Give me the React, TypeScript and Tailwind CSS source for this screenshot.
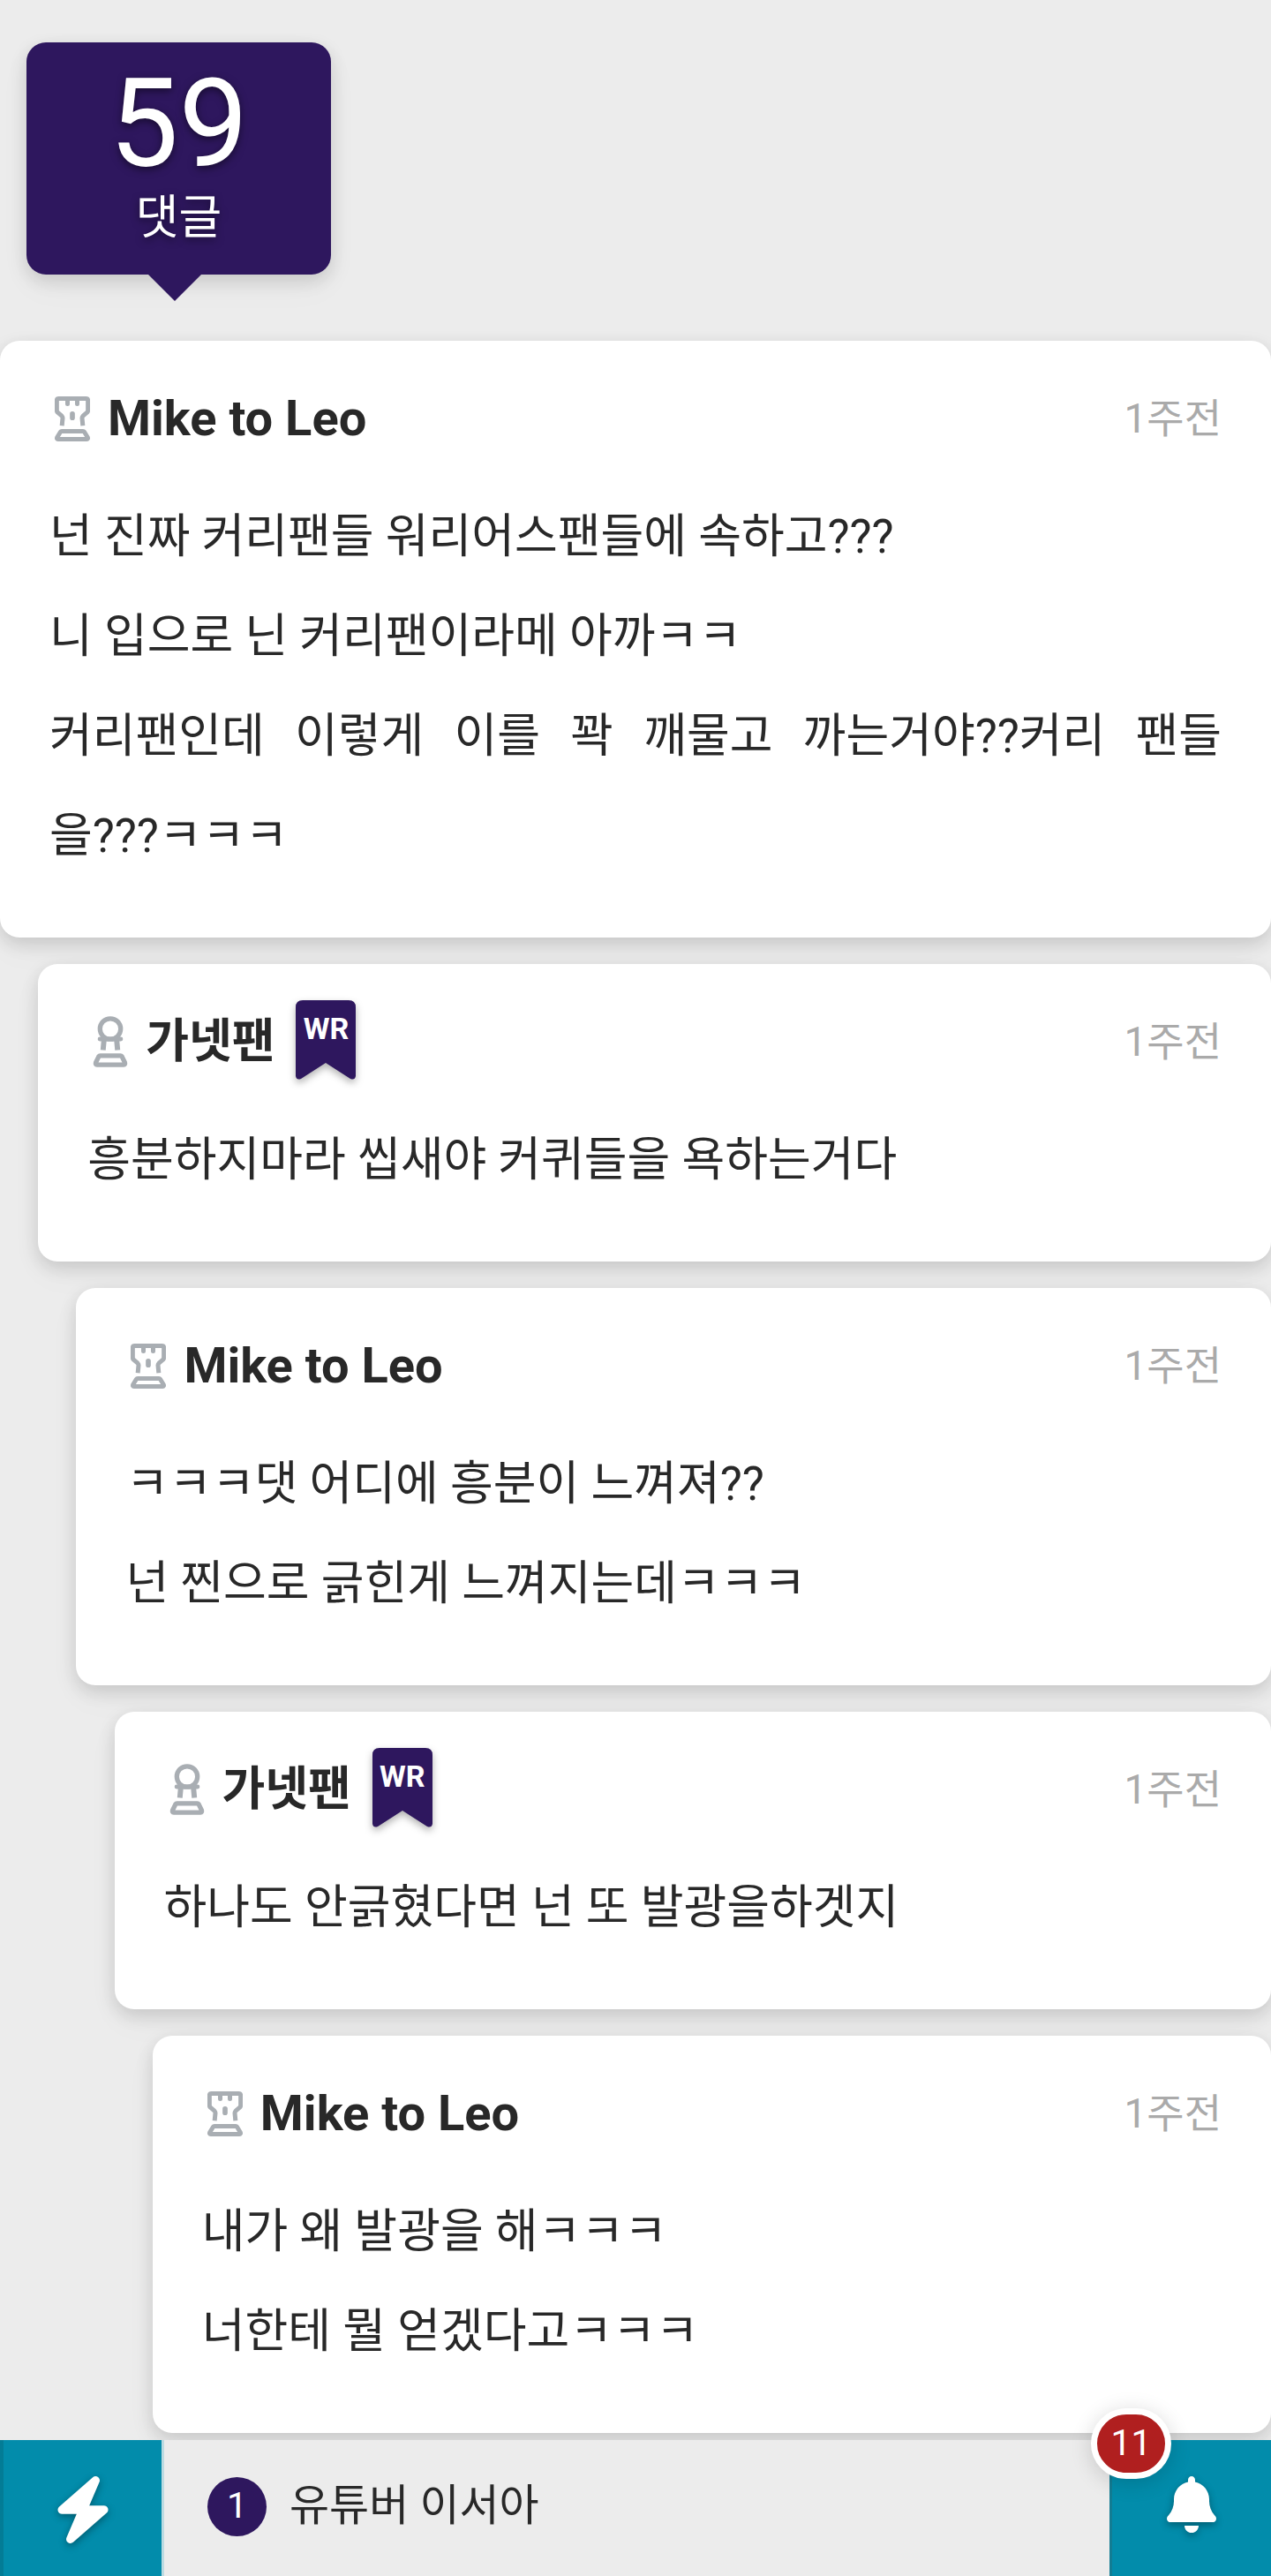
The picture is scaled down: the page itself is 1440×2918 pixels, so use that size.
import React from 'react'
import { FaBell, FaBolt } from 'react-icons/fa6'

type Comment = {
  id: number
  author: string
  authorSize: string
  rank: 'rook' | 'pawn'
  team?: string
  time: string
  indent: string
  lines: React.ReactNode[]
}

const comments: Comment[] = [
  {
    id: 1,
    author: 'Mike to Leo',
    authorSize: 'text-[56px]',
    rank: 'rook',
    time: '1주전',
    indent: 'ml-0',
    lines: [
      '넌 진짜 커리팬들 워리어스팬들에 속하고???',
      '니 입으로 닌 커리팬이라메 아까ㅋㅋ',
      <>
        커리팬인데 이렇게 이를 꽉 깨물고 까는거야??커리 팬들
        <wbr />
        <span className="whitespace-nowrap">을???ㅋㅋㅋ</span>
      </>,
    ],
  },
  {
    id: 2,
    author: '가넷팬',
    authorSize: 'text-[53px]',
    rank: 'pawn',
    team: 'WR',
    time: '1주전',
    indent: 'ml-[3%]',
    lines: ['흥분하지마라 씹새야 커퀴들을 욕하는거다'],
  },
  {
    id: 3,
    author: 'Mike to Leo',
    authorSize: 'text-[56px]',
    rank: 'rook',
    time: '1주전',
    indent: 'ml-[6%]',
    lines: ['ㅋㅋㅋ댓 어디에 흥분이 느껴져??', '넌 찐으로 긁힌게 느껴지는데ㅋㅋㅋ'],
  },
  {
    id: 4,
    author: '가넷팬',
    authorSize: 'text-[53px]',
    rank: 'pawn',
    team: 'WR',
    time: '1주전',
    indent: 'ml-[9%]',
    lines: ['하나도 안긁혔다면 넌 또 발광을하겟지'],
  },
  {
    id: 5,
    author: 'Mike to Leo',
    authorSize: 'text-[56px]',
    rank: 'rook',
    time: '1주전',
    indent: 'ml-[12%]',
    lines: ['내가 왜 발광을 해ㅋㅋㅋ', '너한테 뭘 얻겠다고ㅋㅋㅋ'],
  },
]

const RookIcon = () => (
  <svg
    viewBox="0 0 120 152"
    className="h-[51px] w-10"
    fill="none"
    stroke="currentColor"
    strokeWidth="15"
    strokeLinejoin="round"
    aria-hidden="true"
  >
    <path d="M24.5 99L27 73Q27 69 24 66L10 54Q7 51 7 47V14Q7 7 14 7H106Q113 7 113 14V47Q113 51 110 54L96 66Q93 69 93 73L95.500 99" />
    <path d="M43.500 7V25M76.500 7V25" strokeLinecap="round" />
    <path d="M60 59V72" strokeWidth="17" strokeLinecap="round" />
    <path d="M24 118H96Q99 118 101 121L112 139Q114 145 109 145H11Q6 145 8 139L19 121Q21 118 24 118Z" />
  </svg>
)

const PawnIcon = () => (
  <svg
    viewBox="0 0 118 176"
    className="h-[58px] w-10"
    fill="none"
    stroke="currentColor"
    strokeWidth="16"
    strokeLinejoin="round"
    aria-hidden="true"
  >
    <circle cx="59" cy="44" r="35.5" />
    <path d="M23 79H95" strokeWidth="15" strokeLinecap="round" />
    <path d="M37 84L34 117M81 84L84 117" strokeWidth="18" />
    <path d="M24 136H94Q97 136 99 139L109 160Q111 167 105 167H13Q7 167 9 160L19 139Q21 136 24 136Z" />
  </svg>
)

const TeamRibbon = ({ name }: { name: string }) => (
  <span className="relative -mt-5 -mb-4 ml-6 flex h-[90px] w-[68px] justify-center pt-3">
    <svg
      viewBox="0 0 68 90"
      className="absolute inset-0 h-full w-full text-[#2e175e] drop-shadow-[0_4px_4px_rgba(0,0,0,0.3)]"
      fill="currentColor"
      aria-hidden="true"
    >
      <path d="M8 0H60Q68 0 68 8V86Q67 91 62 89L34 71L6 89Q1 91 0 86V8Q0 0 8 0Z" />
    </svg>
    <span className="relative text-[34px] leading-10 font-bold text-white">{name}</span>
  </span>
)

const CommentCard = ({ comment }: { comment: Comment }) => (
  <article
    className={`rounded-[22px] bg-white px-14 pt-[58px] pb-[58px] shadow-[0_7px_20px_rgba(0,0,0,0.14),0_15px_40px_rgba(0,0,0,0.03)] ${comment.indent}`}
  >
    <header className="flex h-[60px] items-center">
      <span className="flex w-[52px] justify-center text-[#a9aeb3]">
        {comment.rank === 'rook' ? <RookIcon /> : <PawnIcon />}
      </span>
      <h2 className={`ml-[14px] leading-[60px] font-bold ${comment.authorSize}`}>
        {comment.author}
      </h2>
      {comment.team && <TeamRibbon name={comment.team} />}
      <time className="ml-auto text-[46px] leading-[60px] text-[#aaaaaa]">{comment.time}</time>
    </header>
    <div className="mt-12 text-justify text-[53px] leading-[113px]">
      {comment.lines.map((line, index) => (
        <p key={index}>{line}</p>
      ))}
    </div>
  </article>
)

const BottomBar = () => (
  <nav className="sticky bottom-0 mt-auto flex h-[154px] bg-[#ececec]">
    <button
      type="button"
      aria-label="Quick menu"
      className="flex w-[186px] items-center justify-center border-r-3 border-l-4 border-r-[#bcdbe2] border-l-[#037c96] bg-[#028cab] pt-1 text-[76px] text-white"
    >
      <FaBolt className="drop-shadow-[0_3px_4px_rgba(0,0,0,0.35)]" />
    </button>
    <a href="#trend" className="flex flex-1 items-center gap-[26px] pb-1 pl-[49px]">
      <span className="flex size-[67px] items-center justify-center rounded-full bg-[#2e175e] text-[41px] text-white">
        1
      </span>
      <span className="text-[49px] leading-[60px]">유튜버 이서아</span>
    </a>
    <button
      type="button"
      aria-label="Notifications"
      className="relative flex w-[183px] items-center justify-center border-l-3 border-[#127c93] bg-[#028cab] pb-2 text-[64px] text-white"
    >
      <FaBell className="drop-shadow-[0_3px_4px_rgba(0,0,0,0.35)]" />
      <span className="absolute -top-9 -left-6 flex h-20 w-[91px] items-center justify-center rounded-full border-[7px] border-white bg-[#b01f1f] text-[41px] shadow-[0_4px_24px_rgba(0,0,0,0.16)]">
        11
      </span>
    </button>
  </nav>
)

const App = () => {
  return (
    <div
      lang="ko"
      className="flex min-h-screen flex-col bg-[#ececec] font-[Roboto,'Noto_Sans_CJK_KR',sans-serif] text-[#282828]"
    >
      <div className="relative mt-12 ml-[30px] flex h-[263px] w-[345px] flex-col items-center rounded-[22px] bg-[#2e175e] pt-5 text-white shadow-[0_7px_20px_rgba(0,0,0,0.14),0_15px_40px_rgba(0,0,0,0.03)] text-shadow-[0_3px_10px_rgba(0,0,0,0.5)]">
        <strong className="text-[140px] leading-[144px] font-normal">59</strong>
        <span className="mt-[5px] text-[53px] leading-[60px]">댓글</span>
        <span className="absolute top-full left-2/5 border-x-30 border-t-30 border-x-transparent border-t-[#2e175e]" />
      </div>
      <main className="mt-[75px] mb-2 flex flex-col gap-[30px] overflow-x-clip">
        {comments.map((comment) => (
          <CommentCard key={comment.id} comment={comment} />
        ))}
      </main>
      <BottomBar />
    </div>
  )
}

export default App
